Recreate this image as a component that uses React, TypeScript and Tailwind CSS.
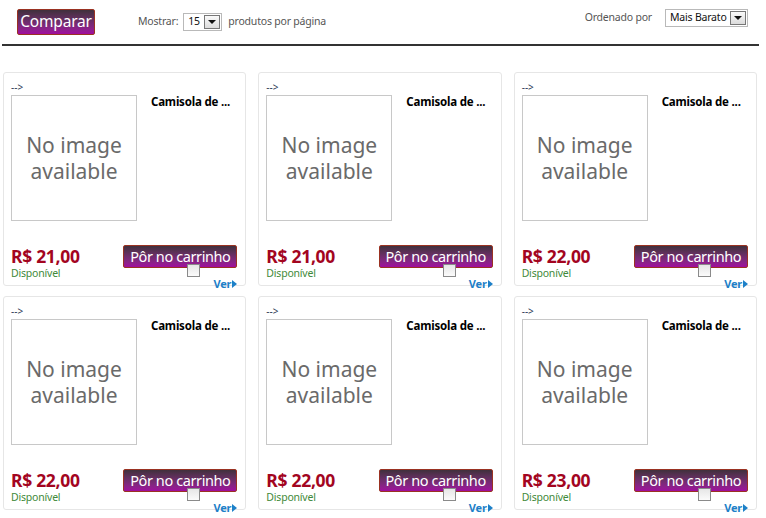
import React from 'react'

const products = [
  { price: '21,00' },
  { price: '21,00' },
  { price: '22,00' },
  { price: '22,00' },
  { price: '22,00' },
  { price: '23,00' },
]

const font = { fontFamily: '"Noto Sans", "Open Sans", Arial, sans-serif' }

function SelectBox({ value, className }: { value: string; className: string }) {
  return (
    <div className={'flex items-stretch border border-[#b9b9b9] bg-white ' + className}>
      <span className="flex flex-1 items-center whitespace-nowrap pl-[4px] text-[10.5px] tracking-[-0.2px] text-[#111]">
        {value}
      </span>
      <span className="m-[1px] flex w-[16px] shrink-0 items-center justify-center border border-[#777] bg-gradient-to-b from-[#fafafa] to-[#dcdcdc]">
        <span className="h-0 w-0 border-x-[4px] border-t-[4px] border-x-transparent border-t-[#111]" />
      </span>
    </div>
  )
}

function PurpleButton({ children, className }: { children: React.ReactNode; className: string }) {
  return (
    <button
      className={
        'flex items-center justify-center whitespace-nowrap rounded-[2px] border border-[#9a3222] bg-gradient-to-b from-[#40303c] to-[#a0099f] leading-none text-white ' +
        className
      }
    >
      {children}
    </button>
  )
}

function ProductCard({ price }: { price: string }) {
  return (
    <div className="flex h-[214px] flex-col rounded-[3px] border border-[#e6e6e6] bg-white pl-[7px] pr-[8px] pt-[6px]">
      <div className="h-[16px] text-[10px] leading-[16px] text-[#2c3a55]">--&gt;</div>
      <div className="flex gap-[14px]">
        <div className="flex h-[126px] w-[126px] shrink-0 flex-col items-center justify-center border border-[#c8c8c8] bg-white text-center text-[21px] leading-[26px] text-[#6a6a6a]">
          <span>No image</span>
          <span>available</span>
        </div>
        <div className="whitespace-nowrap text-[11.5px] font-bold leading-[14px] tracking-[-0.2px] text-black">
          Camisola de ...
        </div>
      </div>
      <div className="mt-[24px] flex items-start justify-between">
        <div className="flex flex-col">
          <span className="text-[17.5px] font-bold leading-[22px] tracking-[-0.3px] text-[#a3051f]">R$ {price}</span>
          <span className="text-[10.5px] leading-[13px] tracking-[-0.2px] text-[#3f8a3a]">Disponível</span>
        </div>
        <div className="relative h-[31px]">
          <PurpleButton className="h-[23px] w-[114px] text-[14.5px] tracking-[-0.4px]">Pôr no carrinho</PurpleButton>
          <span className="absolute left-[64px] top-[19px] h-[13px] w-[13px] border border-[#8a8a8a] bg-gradient-to-b from-[#e6e6e6] to-[#fbfbfb]" />
        </div>
      </div>
      <div className="mt-[-3px] flex h-[13px] items-center justify-end gap-[1px] text-[11px] font-bold leading-[13px] tracking-[-0.2px] text-[#1d80c8]">
        <span>Ver</span>
        <span className="h-0 w-0 border-y-[4px] border-l-[5px] border-y-transparent border-l-[#1d80c8]" />
      </div>
    </div>
  )
}

export default function App() {
  return (
    <div className="h-[518px] w-[766px] overflow-hidden bg-white" style={font}>
      {/* Toolbar */}
      <div className="flex h-[44px] items-start pl-[17px] pr-[18px]">
        <PurpleButton className="mt-[9px] h-[26px] w-[78px] text-[15.5px] tracking-[-0.2px]">Comparar</PurpleButton>
        <div className="ml-[43px] mt-[13px] flex items-center text-[10.5px] tracking-[-0.2px] text-[#555]">
          <span>Mostrar:</span>
          <SelectBox value="15" className="ml-[5px] h-[18px] w-[39px]" />
          <span className="ml-[6px]">produtos por página</span>
        </div>
        <div className="ml-auto mt-[9px] flex items-center text-[10.5px] tracking-[-0.2px] text-[#555]">
          <span>Ordenado por</span>
          <SelectBox value="Mais Barato" className="ml-[13px] h-[18px] w-[83px]" />
        </div>
      </div>
      <div className="mx-[2px] h-[2px] w-[757px] bg-[#333]" />

      {/* Products */}
      <div className="grid w-[757px] grid-cols-3 gap-x-[12px] gap-y-[10px] pl-[3px] pt-[26px]">
        {products.map((p, i) => (
          <ProductCard key={i} price={p.price} />
        ))}
      </div>
    </div>
  )
}
